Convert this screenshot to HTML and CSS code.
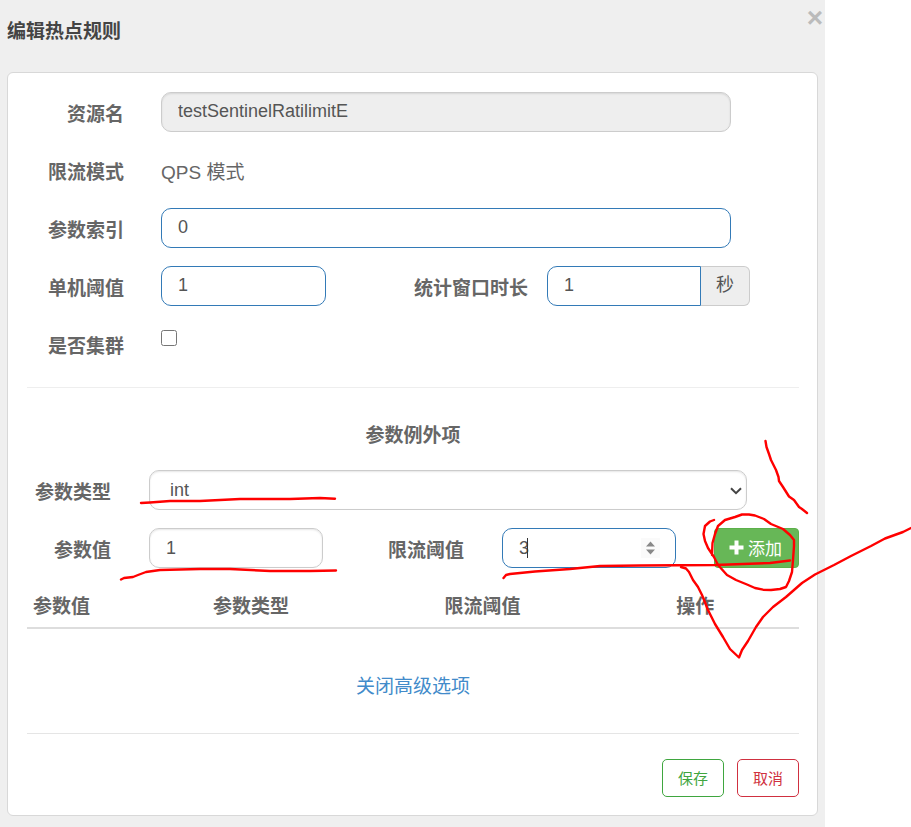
FILE: index.html
```
<!DOCTYPE html>
<html lang="zh-CN">
<head>
    <meta charset="UTF-8">
    <meta name="viewport" content="width=device-width, initial-scale=1.0">
    <title>编辑热点规则</title>
    <link rel="stylesheet" href="styles.css">
</head>
<body>

<div class="dialog">
    <div class="dialog-header">
        <h1 class="dialog-title">编辑热点规则</h1>
        <button type="button" class="close" aria-label="关闭">×</button>
    </div>

    <form class="panel">
        <div class="rows">
            <div class="row">
                <label class="label" for="resource">资源名</label>
                <input class="control" type="text" id="resource" value="testSentinelRatilimitE" disabled>
            </div>
            <div class="row">
                <span class="label">限流模式</span>
                <span class="static">QPS 模式</span>
            </div>
            <div class="row">
                <label class="label" for="param-idx">参数索引</label>
                <input class="control valid" type="text" id="param-idx" value="0">
            </div>
            <div class="row row-threshold">
                <label class="label label-count" for="count">单机阈值</label>
                <input class="control valid" type="text" id="count" value="1">
                <label class="label label-duration" for="duration">统计窗口时长</label>
                <div class="input-group">
                    <input class="control valid" type="text" id="duration" value="1">
                    <span class="addon">秒</span>
                </div>
            </div>
            <div class="row">
                <label class="label" for="cluster">是否集群</label>
                <input class="checkbox" type="checkbox" id="cluster">
            </div>
        </div>

        <hr class="line">

        <h2 class="section-title">参数例外项</h2>
        <div class="rows items-form">
            <div class="row row-type">
                <label class="label" for="param-type">参数类型</label>
                <div class="field">
                    <select class="control" id="param-type">
                        <option>int</option>
                        <option>double</option>
                        <option>long</option>
                    </select>
                    <svg class="chevron" viewBox="0 0 12 8"><path d="M1 1.2 6 6.2 11 1.2"/></svg>
                </div>
            </div>
            <div class="row row-item">
                <label class="label" for="param-value">参数值</label>
                <input class="control" type="text" id="param-value" value="1">
                <label class="label" for="param-limit">限流阈值</label>
                <div class="field">
                    <input class="control valid" type="number" id="param-limit" value="3">
                    <span class="caret"></span>
                    <svg class="spinner" viewBox="0 0 19 20"><path d="M5 8.5 9.5 3.5 14 8.5ZM5 11.5 9.5 16.5 14 11.5Z"/></svg>
                </div>
                <button type="button" class="btn-add">
                    <svg class="plus" viewBox="0 0 15 15"><path d="M5.5 0.5h4v5h5v4h-5v5h-4v-5h-5v-4h5z"/></svg>添加
                </button>
            </div>
        </div>

        <table class="items">
            <thead>
                <tr>
                    <th class="col-value">参数值</th>
                    <th class="col-type">参数类型</th>
                    <th class="col-limit">限流阈值</th>
                    <th>操作</th>
                </tr>
            </thead>
        </table>

        <div class="advanced"><a href="#">关闭高级选项</a></div>

        <hr class="line">

        <div class="actions">
            <button type="button" class="btn btn-save">保存</button>
            <button type="button" class="btn btn-cancel">取消</button>
        </div>
    </form>
</div>

<!-- pen marks drawn over the form -->
<svg class="marks" width="911" height="827" viewBox="0 0 911 827">
    <path d="M141 503 150 502.5 170 501 200 501 240 499 290 499 320 498 335 498.7"/>
    <path d="M121 579.5 124 578 133 577 138 575 146 572 160 570 200 569 230 569 270 571 310 571 336 570.5"/>
    <path d="M503.5 578 506 575 510 574 535 571.5 570 569 600 566 640 565.5 715 565 770 563 790 560.5"/>
    <path d="M714 520 710 521.5 705 526 703.5 534 705 541 708 548 714 557 718 565 727 575 736 580 747 584.5 755 588 763 589.7 771 590 780 589 786 587 789 581 792 572 793 560 794 546 794 540 790 535 783 529 771 524 764 519 755 515.5 749 514.5 742 514.5 735 517 725 520 718 526 715 534 712.5 543 712 555"/>
    <path d="M765.5 441 766.5 447 769 454 771 460 776 470 778.5 477 779 481 783 487 789 496.5 794 500 799 507 802 509 807 513"/>
    <path d="M681 567 686 568.5 689 572 693 580 698 587 702 595 708 610 715 624 723 637 730 649 739 657.5 742 650 748 641 756 627 763 617 773 607 786 597 802 583 815 574.5 834 565 851 556 871 546 885 538.5 903 532 908 529.5 911 528"/>
</svg>

</body>
</html>
```

FILE: styles.css
```
* {
    box-sizing: border-box;
}
body {
    margin: 0;
    background-color: #fff;
    color: #666;
    font-family: "Liberation Sans", "Noto Sans CJK SC", sans-serif;
    font-size: 19px;
    line-height: 28px;
}
input, select, button {
    font-family: inherit;
    color: inherit;
}
.dialog {
    min-height: 100vh;
    margin-right: 86px;
    padding: 0 7px 11px;
    background-color: #efefef;
}
.dialog-header {
    display: flex;
    justify-content: space-between;
    height: 72px;
    margin-right: -6px;
}
.dialog-title {
    margin: 18px 0 0;
    font-size: 19px;
    color: #444;
}
.close {
    width: 18px;
    height: 36px;
    padding: 0;
    border: none;
    background: none;
    color: #bbb;
    font-size: 28px;
    font-weight: bold;
    line-height: 36px;
    cursor: pointer;
}
.panel {
    padding: 19px 18px 18px 19px;
    border: 1px solid #d8d8d8;
    border-radius: 6px;
    background-color: #fff;
}
.rows {
    display: flex;
    flex-direction: column;
    gap: 18px;
}
.row {
    display: grid;
    grid-template-columns: 97px 1fr;
    column-gap: 37px;
    align-items: center;
    min-height: 40px;
    padding-right: 68px;
}
.row-threshold {
    grid-template-columns: 134px 165fr 221px 203fr;
    column-gap: 0;
    padding-right: 49px;
}
.row-type {
    grid-template-columns: 84px 1fr;
    column-gap: 38px;
    padding-right: 52px;
}
.row-item {
    grid-template-columns: 84px 1fr 103px 1fr 85px;
    column-gap: 38px;
    padding-right: 0;
}
.label {
    padding-top: 6px;
    font-weight: bold;
    text-align: right;
    white-space: nowrap;
}
.label-count {
    padding-right: 37px;
}
.label-duration {
    padding-right: 19px;
}
.static {
    padding-top: 6px;
}
.control {
    width: 100%;
    min-width: 0;
    height: 40px;
    padding: 0 16px 2px;
    border: 1px solid #ccc;
    border-radius: 10px;
    background-color: #fff;
    box-shadow: inset 0 1px 2px rgba(0, 0, 0, 0.1);
    color: #555;
    font-size: 18px;
    outline: none;
}
.control:disabled {
    background-color: #eee;
}
.control.valid {
    border-color: #337ab7;
    box-shadow: none;
}
.items-form .control {
    padding-bottom: 0;
}
.input-group {
    display: flex;
}
.input-group .control {
    flex: 1;
    border-radius: 10px 0 0 10px;
}
.addon {
    width: 49px;
    height: 40px;
    border: 1px solid #ccc;
    border-left: none;
    border-radius: 0 6px 6px 0;
    background-color: #eee;
    color: #555;
    font-size: 18px;
    line-height: 36px;
    text-align: center;
}
.checkbox {
    align-self: start;
    width: 16px;
    height: 16px;
    margin: 6px 0 0;
}
.line {
    margin: 23px 0 0;
    border: none;
    border-top: 1px solid #eee;
}
.section-title {
    margin: 34px 0 20px;
    font-size: 19px;
    text-align: center;
}
.field {
    position: relative;
}
select.control {
    appearance: none;
    padding-left: 20px;
}
input[type="number"] {
    appearance: textfield;
}
.chevron {
    position: absolute;
    top: 17px;
    right: 5px;
    width: 12px;
    height: 8px;
    fill: none;
    stroke: #444;
    stroke-width: 2;
    pointer-events: none;
}
.spinner {
    position: absolute;
    top: 10px;
    right: 16px;
    width: 19px;
    height: 20px;
    background-color: #fafafa;
    fill: #888;
}
.caret {
    position: absolute;
    top: 10px;
    left: 25px;
    width: 1px;
    height: 20px;
    background-color: #333;
}
.btn-add {
    display: flex;
    align-items: center;
    justify-content: center;
    gap: 4px;
    height: 40px;
    padding: 0 2px 2px 0;
    border: 1px solid #5cb04a;
    border-radius: 4px;
    background-color: #67b757;
    color: #fff;
    font-size: 17px;
    cursor: pointer;
}
.plus {
    width: 15px;
    height: 15px;
    fill: #fff;
}
.items {
    width: 100%;
    margin-top: 20px;
    border-collapse: collapse;
    table-layout: fixed;
}
.items th {
    padding: 5px 6px 6px;
    border-bottom: 2px solid #ddd;
    text-align: left;
}
.col-value {
    width: 180px;
}
.col-type, .col-limit {
    width: 30%;
}
.advanced {
    margin: 44px 0 32px;
    text-align: center;
}
.advanced a {
    color: #428bca;
    text-decoration: none;
}
.advanced + .line {
    border-color: #e5e5e5;
}
.actions {
    display: flex;
    justify-content: flex-end;
    gap: 13px;
    margin-top: 25px;
}
.btn {
    width: 62px;
    height: 38px;
    padding: 0 0 2px;
    border: 1px solid;
    border-radius: 5px;
    background-color: #fff;
    font-size: 15px;
    cursor: pointer;
}
.btn-save {
    border-color: #3fa63f;
    color: #3fa63f;
}
.btn-cancel {
    border-color: #d03040;
    color: #d03040;
}
.marks {
    position: absolute;
    top: 0;
    left: 0;
    fill: none;
    stroke: #f00;
    stroke-width: 2.4;
    stroke-linecap: round;
    stroke-linejoin: round;
    pointer-events: none;
}
```
